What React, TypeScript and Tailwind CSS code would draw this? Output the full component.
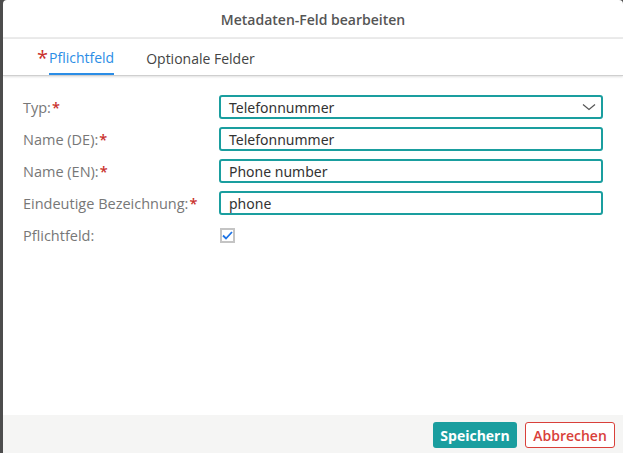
import React from "react";

const font = { fontFamily: '"Open Sans", "Noto Sans", sans-serif' };

function Label({ text, required }: { text: string; required?: boolean }) {
  return (
    <div className="flex items-center h-[24px] pt-[2px] text-[14.5px] text-[#777777]">
      <span>{text}</span>
      {required && <span className="ml-[1px] text-[#c9302c] font-semibold">*</span>}
    </div>
  );
}

function Input({ value }: { value: string }) {
  return (
    <div className="h-[24px] flex items-center rounded-[3px] border-2 border-[#1a9e9f] pl-[8px] text-[14px] text-[#333333]" style={{ fontFamily: '"Noto Sans", "Open Sans", sans-serif' }}>
      {value}
    </div>
  );
}

export default function App() {
  return (
    <div className="w-[623px] h-[453px] bg-[#4d4d4d] flex overflow-hidden" style={font}>
      <div className="ml-[3px] flex-1 bg-white rounded-t-[4px] flex flex-col">
        <div className="h-[39px] border-b-2 border-[#ebebeb] flex items-center justify-center pt-[2px] text-[14px] font-semibold text-[#555555]">
          Metadaten-Feld bearbeiten
        </div>
        <div className="h-[37px] flex items-stretch pl-[34px] border-b border-[#cfcfcf] shadow-[0_1px_2px_rgba(0,0,0,0.12)] text-[14px]">
          <div className="flex items-stretch">
            <span className="text-[#c9302c] text-[20px] leading-none pt-[9px]">*</span>
            <span className="ml-[1px] flex items-center pt-[3px] border-b-2 border-[#2b8de6] text-[#2b8de6]">Pflichtfeld</span>
          </div>
          <div className="flex items-center pt-[3px] ml-[32px] text-[#444444]">Optionale Felder</div>
        </div>
        <div className="flex-1 pt-[19px] pl-[20px] pr-[20px]">
          <div className="grid grid-cols-[196px_1fr] gap-y-[8px]">
            <Label text="Typ:" required />
            <div className="h-[24px] flex items-center justify-between rounded-[3px] border-2 border-[#1a9e9f] pl-[8px] pr-[5px] text-[14px] text-[#333333]" style={{ fontFamily: '"Noto Sans", "Open Sans", sans-serif' }}>
              <span>Telefonnummer</span>
              <svg width="14" height="8" viewBox="0 0 14 8" fill="none">
                <path d="M1 1.5 L7 6.5 L13 1.5" stroke="#555" strokeWidth="1.2" />
              </svg>
            </div>
            <Label text="Name (DE):" required />
            <Input value="Telefonnummer" />
            <Label text="Name (EN):" required />
            <Input value="Phone number" />
            <Label text="Eindeutige Bezeichnung:" required />
            <Input value="phone" />
            <Label text="Pflichtfeld:" />
            <div className="h-[24px] flex items-center pl-[1px]">
              <div className="w-[15px] h-[15px] border-2 border-[#c4c4c4] bg-white flex items-center justify-center">
                <svg width="11" height="9" viewBox="0 0 11 9" fill="none">
                  <path d="M1 4.5 L4 7.5 L10 1" stroke="#1e74e6" strokeWidth="1.8" />
                </svg>
              </div>
            </div>
          </div>
        </div>
        <div className="h-[38px] bg-[#f5f5f4] flex justify-end items-start pt-[7px] pr-[8px] gap-[8px]">
          <button className="w-[84px] h-[26px] rounded-[3px] bg-[#1a9e9f] text-white text-[14px] font-bold">
            Speichern
          </button>
          <button className="w-[90px] h-[26px] rounded-[3px] bg-white border border-[#d9403a] text-[#d9403a] text-[14px] font-semibold">
            Abbrechen
          </button>
        </div>
      </div>
    </div>
  );
}
